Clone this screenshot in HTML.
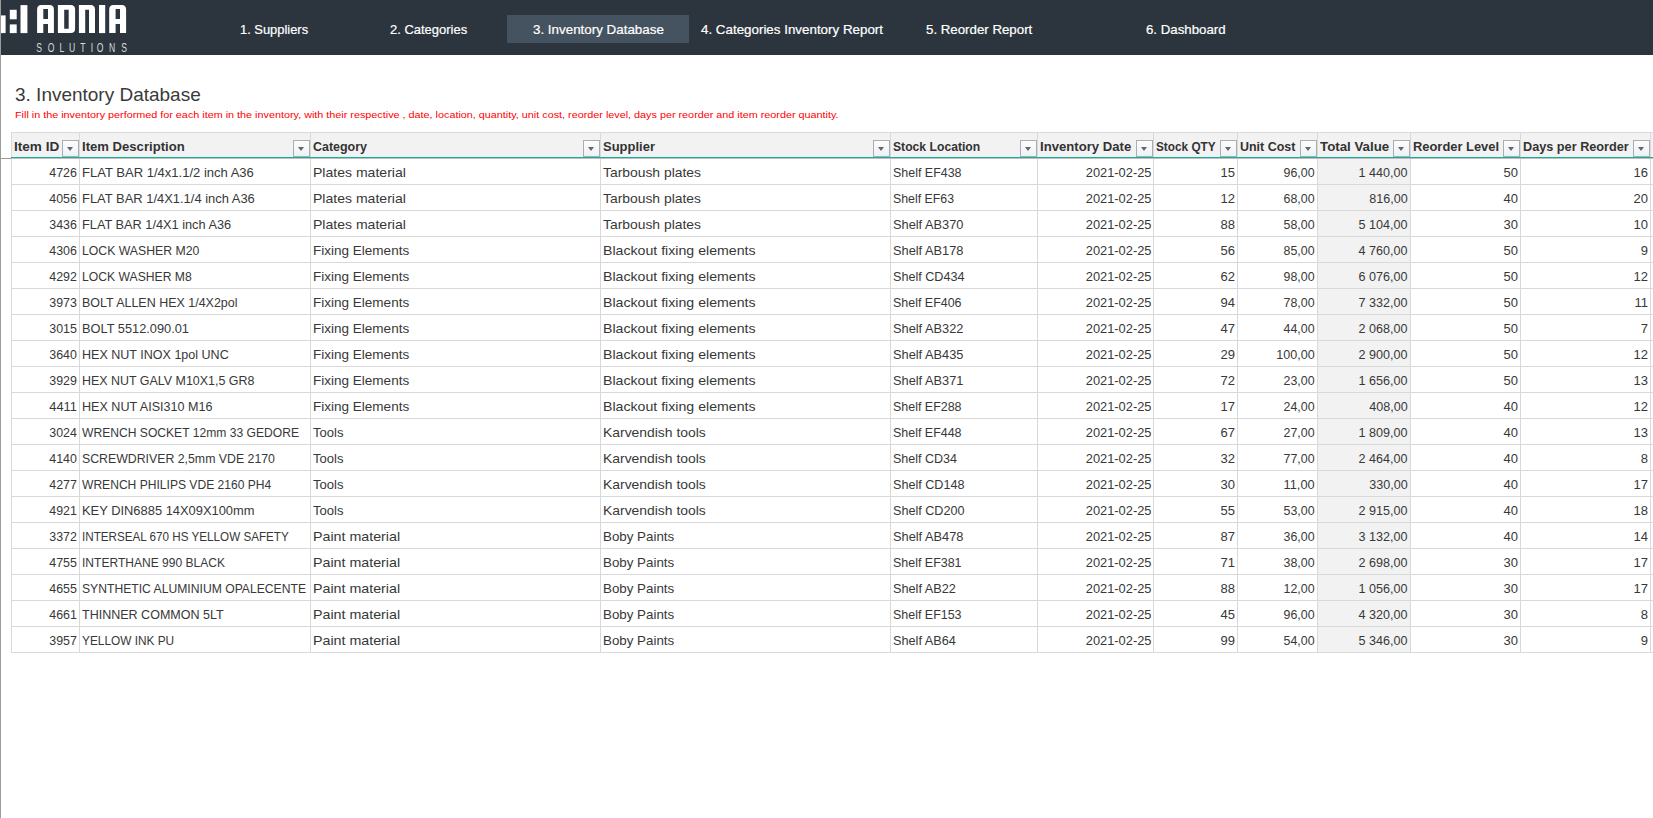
<!DOCTYPE html>
<html><head><meta charset="utf-8"><title>3. Inventory Database</title><style>
*{margin:0;padding:0;box-sizing:border-box}
html,body{width:1653px;height:818px;overflow:hidden;background:#fff}
body{position:relative;font-family:"Liberation Sans",sans-serif;color:#333}
.a{position:absolute}
.t{position:absolute;white-space:nowrap}
.t span{display:inline-block}
.hdr{left:0;top:0;width:1653px;height:55px;background:#2c353e}
.nav{top:16px;height:28px;line-height:28px;font-size:13px;color:#fff;-webkit-text-stroke:0.2px #fff}
.tab{left:507px;top:15px;width:182px;height:28px;background:#45525f}
.c{height:26px;line-height:30px;font-size:13px;color:#383838}
.h{font-weight:bold;color:#333}
.vl{position:absolute;width:1px;background:#d9d9d9}
.hl{position:absolute;height:1px;background:#d9d9d9}
.fb{position:absolute;width:17px;height:17px;border:1px solid #a9aeb6;background:linear-gradient(#fdfdfd,#eef1f5)}
.fb:after{content:"";position:absolute;left:4px;top:6px;border-left:3.5px solid transparent;border-right:3.5px solid transparent;border-top:4px solid #666}
</style></head>
<body>
<div class="a hdr"></div>
<div class="a tab"></div>
<svg class="a" style="left:0;top:0" width="140" height="55" viewBox="0 0 140 55">
<g fill="#fff">
<rect x="0" y="15.4" width="5.6" height="17.7"/>
<rect x="9.8" y="9.8" width="6.9" height="9.5"/>
<rect x="9.8" y="24.4" width="6.9" height="8.7"/>
<rect x="20.5" y="5.1" width="6.9" height="28"/>
<path d="M37.1 33.1V9.5Q37.1 5 41.3 5H49.7Q53.9 5 53.9 9.5V33.1H48V24.1H43.3V33.1ZM43.3 9.1V19.1H48V9.1Z" fill-rule="evenodd"/>
<path d="M57.9 5H70.7Q75.1 5 75.1 9.5V28.7Q75.1 33.1 70.7 33.1H57.9ZM64.2 9.7V28.7H68.7V9.7Z" fill-rule="evenodd"/>
<path d="M78.9 5H90.6Q95 5 95 9.5V33.1H89V9.7H85.2V33.1H78.9Z"/>
<rect x="99" y="5" width="6.2" height="28.1"/>
<path d="M109.2 33.1V9.5Q109.2 5 113.4 5H121.9Q126.1 5 126.1 9.5V33.1H120V24.1H115.6V33.1ZM115.6 9.1V19.1H120V9.1Z" fill-rule="evenodd"/>
</g></svg>
<div class="a" style="left:29.4px;top:40px;width:20px;text-align:center;font-size:13px;line-height:15px;color:#dadada;transform:scaleX(0.66)">S</div>
<div class="a" style="left:41.1px;top:40px;width:20px;text-align:center;font-size:13px;line-height:15px;color:#dadada;transform:scaleX(0.66)">O</div>
<div class="a" style="left:52.0px;top:40px;width:20px;text-align:center;font-size:13px;line-height:15px;color:#dadada;transform:scaleX(0.66)">L</div>
<div class="a" style="left:62.3px;top:40px;width:20px;text-align:center;font-size:13px;line-height:15px;color:#dadada;transform:scaleX(0.66)">U</div>
<div class="a" style="left:72.8px;top:40px;width:20px;text-align:center;font-size:13px;line-height:15px;color:#dadada;transform:scaleX(0.66)">T</div>
<div class="a" style="left:81.5px;top:40px;width:20px;text-align:center;font-size:13px;line-height:15px;color:#dadada;transform:scaleX(0.66)">I</div>
<div class="a" style="left:90.3px;top:40px;width:20px;text-align:center;font-size:13px;line-height:15px;color:#dadada;transform:scaleX(0.66)">O</div>
<div class="a" style="left:101.7px;top:40px;width:20px;text-align:center;font-size:13px;line-height:15px;color:#dadada;transform:scaleX(0.66)">N</div>
<div class="a" style="left:113.6px;top:40px;width:20px;text-align:center;font-size:13px;line-height:15px;color:#dadada;transform:scaleX(0.66)">S</div>
<div class="a" style="left:0;top:0;width:1px;height:818px;background:#9c9c9c"></div>
<div class="t nav" style="left:239.5px"><span style="transform:scaleX(0.992);transform-origin:left">1. Suppliers</span></div>
<div class="t nav" style="left:389.7px"><span style="transform:scaleX(0.998);transform-origin:left">2. Categories</span></div>
<div class="t nav" style="left:532.8px"><span style="transform:scaleX(1.029);transform-origin:left">3. Inventory Database</span></div>
<div class="t nav" style="left:700.6px"><span style="transform:scaleX(1.028);transform-origin:left">4. Categories Inventory Report</span></div>
<div class="t nav" style="left:926.4px"><span style="transform:scaleX(1.021);transform-origin:left">5. Reorder Report</span></div>
<div class="t nav" style="left:1146.0px"><span style="transform:scaleX(1.020);transform-origin:left">6. Dashboard</span></div>
<div class="t a" style="left:15.4px;top:84px;font-size:19px;line-height:22px;color:#3a3a3a"><span style="transform:scaleX(0.999);transform-origin:left">3. Inventory Database</span></div>
<div class="t a" style="left:14.8px;top:109px;font-size:9px;line-height:12px;color:#f00"><span style="transform:scaleX(1.200);transform-origin:left">Fill in the inventory performed for each item in the inventory, with their respective , date, location, quantity, unit cost, reorder level, days per reorder and item reorder quantity.</span></div>
<div class="a" style="left:11px;top:132px;width:1642px;height:26px;background:#f2f2f2"></div>
<div class="a" style="left:1317px;top:158px;width:93px;height:494px;background:#f2f2f2"></div>
<div class="vl" style="left:11px;top:132px;height:521px"></div>
<div class="vl" style="left:79px;top:132px;height:521px"></div>
<div class="vl" style="left:310px;top:132px;height:521px"></div>
<div class="vl" style="left:600px;top:132px;height:521px"></div>
<div class="vl" style="left:890px;top:132px;height:521px"></div>
<div class="vl" style="left:1037px;top:132px;height:521px"></div>
<div class="vl" style="left:1153px;top:132px;height:521px"></div>
<div class="vl" style="left:1237px;top:132px;height:521px"></div>
<div class="vl" style="left:1317px;top:132px;height:521px"></div>
<div class="vl" style="left:1410px;top:132px;height:521px"></div>
<div class="vl" style="left:1520px;top:132px;height:521px"></div>
<div class="vl" style="left:1650px;top:132px;height:521px"></div>
<div class="hl" style="left:11px;top:132px;width:1642px"></div>
<div class="hl" style="left:11px;top:184px;width:1642px"></div>
<div class="hl" style="left:11px;top:210px;width:1642px"></div>
<div class="hl" style="left:11px;top:236px;width:1642px"></div>
<div class="hl" style="left:11px;top:262px;width:1642px"></div>
<div class="hl" style="left:11px;top:288px;width:1642px"></div>
<div class="hl" style="left:11px;top:314px;width:1642px"></div>
<div class="hl" style="left:11px;top:340px;width:1642px"></div>
<div class="hl" style="left:11px;top:366px;width:1642px"></div>
<div class="hl" style="left:11px;top:392px;width:1642px"></div>
<div class="hl" style="left:11px;top:418px;width:1642px"></div>
<div class="hl" style="left:11px;top:444px;width:1642px"></div>
<div class="hl" style="left:11px;top:470px;width:1642px"></div>
<div class="hl" style="left:11px;top:496px;width:1642px"></div>
<div class="hl" style="left:11px;top:522px;width:1642px"></div>
<div class="hl" style="left:11px;top:548px;width:1642px"></div>
<div class="hl" style="left:11px;top:574px;width:1642px"></div>
<div class="hl" style="left:11px;top:600px;width:1642px"></div>
<div class="hl" style="left:11px;top:626px;width:1642px"></div>
<div class="hl" style="left:11px;top:652px;width:1642px"></div>
<div class="a" style="left:11px;top:157px;width:1642px;height:1px;background:#0db2a2"></div>
<div class="a" style="left:11px;top:158px;width:1642px;height:1px;background:#c4bcbc"></div>
<div class="a" style="left:0;top:158px;width:11px;height:1px;background:#9c9c9c"></div>
<div class="t c h" style="left:14px;top:132px"><span style="transform:scaleX(1.043);transform-origin:left">Item ID</span></div>
<div class="fb" style="left:62px;top:140px"></div>
<div class="t c h" style="left:82px;top:132px"><span style="transform:scaleX(1.008);transform-origin:left">Item Description</span></div>
<div class="fb" style="left:293px;top:140px"></div>
<div class="t c h" style="left:313px;top:132px"><span style="transform:scaleX(0.958);transform-origin:left">Category</span></div>
<div class="fb" style="left:583px;top:140px"></div>
<div class="t c h" style="left:603px;top:132px"><span style="transform:scaleX(0.999);transform-origin:left">Supplier</span></div>
<div class="fb" style="left:873px;top:140px"></div>
<div class="t c h" style="left:893px;top:132px"><span style="transform:scaleX(0.936);transform-origin:left">Stock Location</span></div>
<div class="fb" style="left:1020px;top:140px"></div>
<div class="t c h" style="left:1040px;top:132px"><span style="transform:scaleX(1.010);transform-origin:left">Inventory Date</span></div>
<div class="fb" style="left:1136px;top:140px"></div>
<div class="t c h" style="left:1156px;top:132px"><span style="transform:scaleX(0.908);transform-origin:left">Stock QTY</span></div>
<div class="fb" style="left:1220px;top:140px"></div>
<div class="t c h" style="left:1240px;top:132px"><span style="transform:scaleX(0.958);transform-origin:left">Unit Cost</span></div>
<div class="fb" style="left:1300px;top:140px"></div>
<div class="t c h" style="left:1320px;top:132px"><span style="transform:scaleX(1.023);transform-origin:left">Total Value</span></div>
<div class="fb" style="left:1393px;top:140px"></div>
<div class="t c h" style="left:1413px;top:132px"><span style="transform:scaleX(0.992);transform-origin:left">Reorder Level</span></div>
<div class="fb" style="left:1503px;top:140px"></div>
<div class="t c h" style="left:1523px;top:132px"><span style="transform:scaleX(0.976);transform-origin:left">Days per Reorder</span></div>
<div class="fb" style="left:1633px;top:140px"></div>
<div class="t c" style="right:1576px;top:158px"><span style="transform:scaleX(0.955);transform-origin:right">4726</span></div>
<div class="t c" style="left:82px;top:158px"><span style="transform:scaleX(1.002);transform-origin:left">FLAT BAR 1/4x1.1/2 inch A36</span></div>
<div class="t c" style="left:313px;top:158px"><span style="transform:scaleX(1.080);transform-origin:left">Plates material</span></div>
<div class="t c" style="left:603px;top:158px"><span style="transform:scaleX(1.067);transform-origin:left">Tarboush plates</span></div>
<div class="t c" style="left:893px;top:158px"><span style="transform:scaleX(0.958);transform-origin:left">Shelf EF438</span></div>
<div class="t c" style="right:502px;top:158px"><span style="transform:scaleX(0.989);transform-origin:right">2021-02-25</span></div>
<div class="t c" style="right:418px;top:158px"><span style="transform:scaleX(1.000);transform-origin:right">15</span></div>
<div class="t c" style="right:338px;top:158px"><span style="transform:scaleX(0.952);transform-origin:right">96,00</span></div>
<div class="t c" style="right:245px;top:158px"><span style="transform:scaleX(0.968);transform-origin:right">1 440,00</span></div>
<div class="t c" style="right:135px;top:158px"><span style="transform:scaleX(1.000);transform-origin:right">50</span></div>
<div class="t c" style="right:5px;top:158px"><span style="transform:scaleX(1.000);transform-origin:right">16</span></div>
<div class="t c" style="right:1576px;top:184px"><span style="transform:scaleX(0.955);transform-origin:right">4056</span></div>
<div class="t c" style="left:82px;top:184px"><span style="transform:scaleX(0.995);transform-origin:left">FLAT BAR 1/4X1.1/4 inch A36</span></div>
<div class="t c" style="left:313px;top:184px"><span style="transform:scaleX(1.080);transform-origin:left">Plates material</span></div>
<div class="t c" style="left:603px;top:184px"><span style="transform:scaleX(1.067);transform-origin:left">Tarboush plates</span></div>
<div class="t c" style="left:893px;top:184px"><span style="transform:scaleX(0.949);transform-origin:left">Shelf EF63</span></div>
<div class="t c" style="right:502px;top:184px"><span style="transform:scaleX(0.989);transform-origin:right">2021-02-25</span></div>
<div class="t c" style="right:418px;top:184px"><span style="transform:scaleX(1.000);transform-origin:right">12</span></div>
<div class="t c" style="right:338px;top:184px"><span style="transform:scaleX(0.952);transform-origin:right">68,00</span></div>
<div class="t c" style="right:245px;top:184px"><span style="transform:scaleX(0.967);transform-origin:right">816,00</span></div>
<div class="t c" style="right:135px;top:184px"><span style="transform:scaleX(1.000);transform-origin:right">40</span></div>
<div class="t c" style="right:5px;top:184px"><span style="transform:scaleX(1.000);transform-origin:right">20</span></div>
<div class="t c" style="right:1576px;top:210px"><span style="transform:scaleX(0.955);transform-origin:right">3436</span></div>
<div class="t c" style="left:82px;top:210px"><span style="transform:scaleX(0.981);transform-origin:left">FLAT BAR 1/4X1 inch A36</span></div>
<div class="t c" style="left:313px;top:210px"><span style="transform:scaleX(1.080);transform-origin:left">Plates material</span></div>
<div class="t c" style="left:603px;top:210px"><span style="transform:scaleX(1.067);transform-origin:left">Tarboush plates</span></div>
<div class="t c" style="left:893px;top:210px"><span style="transform:scaleX(0.984);transform-origin:left">Shelf AB370</span></div>
<div class="t c" style="right:502px;top:210px"><span style="transform:scaleX(0.989);transform-origin:right">2021-02-25</span></div>
<div class="t c" style="right:418px;top:210px"><span style="transform:scaleX(1.000);transform-origin:right">88</span></div>
<div class="t c" style="right:338px;top:210px"><span style="transform:scaleX(0.952);transform-origin:right">58,00</span></div>
<div class="t c" style="right:245px;top:210px"><span style="transform:scaleX(0.968);transform-origin:right">5 104,00</span></div>
<div class="t c" style="right:135px;top:210px"><span style="transform:scaleX(1.000);transform-origin:right">30</span></div>
<div class="t c" style="right:5px;top:210px"><span style="transform:scaleX(1.000);transform-origin:right">10</span></div>
<div class="t c" style="right:1576px;top:236px"><span style="transform:scaleX(0.955);transform-origin:right">4306</span></div>
<div class="t c" style="left:82px;top:236px"><span style="transform:scaleX(0.942);transform-origin:left">LOCK WASHER M20</span></div>
<div class="t c" style="left:313px;top:236px"><span style="transform:scaleX(1.040);transform-origin:left">Fixing Elements</span></div>
<div class="t c" style="left:603px;top:236px"><span style="transform:scaleX(1.088);transform-origin:left">Blackout fixing elements</span></div>
<div class="t c" style="left:893px;top:236px"><span style="transform:scaleX(0.984);transform-origin:left">Shelf AB178</span></div>
<div class="t c" style="right:502px;top:236px"><span style="transform:scaleX(0.989);transform-origin:right">2021-02-25</span></div>
<div class="t c" style="right:418px;top:236px"><span style="transform:scaleX(1.000);transform-origin:right">56</span></div>
<div class="t c" style="right:338px;top:236px"><span style="transform:scaleX(0.952);transform-origin:right">85,00</span></div>
<div class="t c" style="right:245px;top:236px"><span style="transform:scaleX(0.968);transform-origin:right">4 760,00</span></div>
<div class="t c" style="right:135px;top:236px"><span style="transform:scaleX(1.000);transform-origin:right">50</span></div>
<div class="t c" style="right:5px;top:236px"><span style="transform:scaleX(1.000);transform-origin:right">9</span></div>
<div class="t c" style="right:1576px;top:262px"><span style="transform:scaleX(0.955);transform-origin:right">4292</span></div>
<div class="t c" style="left:82px;top:262px"><span style="transform:scaleX(0.936);transform-origin:left">LOCK WASHER M8</span></div>
<div class="t c" style="left:313px;top:262px"><span style="transform:scaleX(1.040);transform-origin:left">Fixing Elements</span></div>
<div class="t c" style="left:603px;top:262px"><span style="transform:scaleX(1.088);transform-origin:left">Blackout fixing elements</span></div>
<div class="t c" style="left:893px;top:262px"><span style="transform:scaleX(0.970);transform-origin:left">Shelf CD434</span></div>
<div class="t c" style="right:502px;top:262px"><span style="transform:scaleX(0.989);transform-origin:right">2021-02-25</span></div>
<div class="t c" style="right:418px;top:262px"><span style="transform:scaleX(1.000);transform-origin:right">62</span></div>
<div class="t c" style="right:338px;top:262px"><span style="transform:scaleX(0.952);transform-origin:right">98,00</span></div>
<div class="t c" style="right:245px;top:262px"><span style="transform:scaleX(0.968);transform-origin:right">6 076,00</span></div>
<div class="t c" style="right:135px;top:262px"><span style="transform:scaleX(1.000);transform-origin:right">50</span></div>
<div class="t c" style="right:5px;top:262px"><span style="transform:scaleX(1.000);transform-origin:right">12</span></div>
<div class="t c" style="right:1576px;top:288px"><span style="transform:scaleX(0.955);transform-origin:right">3973</span></div>
<div class="t c" style="left:82px;top:288px"><span style="transform:scaleX(0.959);transform-origin:left">BOLT ALLEN HEX 1/4X2pol</span></div>
<div class="t c" style="left:313px;top:288px"><span style="transform:scaleX(1.040);transform-origin:left">Fixing Elements</span></div>
<div class="t c" style="left:603px;top:288px"><span style="transform:scaleX(1.088);transform-origin:left">Blackout fixing elements</span></div>
<div class="t c" style="left:893px;top:288px"><span style="transform:scaleX(0.958);transform-origin:left">Shelf EF406</span></div>
<div class="t c" style="right:502px;top:288px"><span style="transform:scaleX(0.989);transform-origin:right">2021-02-25</span></div>
<div class="t c" style="right:418px;top:288px"><span style="transform:scaleX(1.000);transform-origin:right">94</span></div>
<div class="t c" style="right:338px;top:288px"><span style="transform:scaleX(0.952);transform-origin:right">78,00</span></div>
<div class="t c" style="right:245px;top:288px"><span style="transform:scaleX(0.968);transform-origin:right">7 332,00</span></div>
<div class="t c" style="right:135px;top:288px"><span style="transform:scaleX(1.000);transform-origin:right">50</span></div>
<div class="t c" style="right:5px;top:288px"><span style="transform:scaleX(1.000);transform-origin:right">11</span></div>
<div class="t c" style="right:1576px;top:314px"><span style="transform:scaleX(0.955);transform-origin:right">3015</span></div>
<div class="t c" style="left:82px;top:314px"><span style="transform:scaleX(0.984);transform-origin:left">BOLT 5512.090.01</span></div>
<div class="t c" style="left:313px;top:314px"><span style="transform:scaleX(1.040);transform-origin:left">Fixing Elements</span></div>
<div class="t c" style="left:603px;top:314px"><span style="transform:scaleX(1.088);transform-origin:left">Blackout fixing elements</span></div>
<div class="t c" style="left:893px;top:314px"><span style="transform:scaleX(0.984);transform-origin:left">Shelf AB322</span></div>
<div class="t c" style="right:502px;top:314px"><span style="transform:scaleX(0.989);transform-origin:right">2021-02-25</span></div>
<div class="t c" style="right:418px;top:314px"><span style="transform:scaleX(1.000);transform-origin:right">47</span></div>
<div class="t c" style="right:338px;top:314px"><span style="transform:scaleX(0.952);transform-origin:right">44,00</span></div>
<div class="t c" style="right:245px;top:314px"><span style="transform:scaleX(0.968);transform-origin:right">2 068,00</span></div>
<div class="t c" style="right:135px;top:314px"><span style="transform:scaleX(1.000);transform-origin:right">50</span></div>
<div class="t c" style="right:5px;top:314px"><span style="transform:scaleX(1.000);transform-origin:right">7</span></div>
<div class="t c" style="right:1576px;top:340px"><span style="transform:scaleX(0.955);transform-origin:right">3640</span></div>
<div class="t c" style="left:82px;top:340px"><span style="transform:scaleX(0.964);transform-origin:left">HEX NUT INOX 1pol UNC</span></div>
<div class="t c" style="left:313px;top:340px"><span style="transform:scaleX(1.040);transform-origin:left">Fixing Elements</span></div>
<div class="t c" style="left:603px;top:340px"><span style="transform:scaleX(1.088);transform-origin:left">Blackout fixing elements</span></div>
<div class="t c" style="left:893px;top:340px"><span style="transform:scaleX(0.984);transform-origin:left">Shelf AB435</span></div>
<div class="t c" style="right:502px;top:340px"><span style="transform:scaleX(0.989);transform-origin:right">2021-02-25</span></div>
<div class="t c" style="right:418px;top:340px"><span style="transform:scaleX(1.000);transform-origin:right">29</span></div>
<div class="t c" style="right:338px;top:340px"><span style="transform:scaleX(0.967);transform-origin:right">100,00</span></div>
<div class="t c" style="right:245px;top:340px"><span style="transform:scaleX(0.968);transform-origin:right">2 900,00</span></div>
<div class="t c" style="right:135px;top:340px"><span style="transform:scaleX(1.000);transform-origin:right">50</span></div>
<div class="t c" style="right:5px;top:340px"><span style="transform:scaleX(1.000);transform-origin:right">12</span></div>
<div class="t c" style="right:1576px;top:366px"><span style="transform:scaleX(0.955);transform-origin:right">3929</span></div>
<div class="t c" style="left:82px;top:366px"><span style="transform:scaleX(0.957);transform-origin:left">HEX NUT GALV M10X1,5 GR8</span></div>
<div class="t c" style="left:313px;top:366px"><span style="transform:scaleX(1.040);transform-origin:left">Fixing Elements</span></div>
<div class="t c" style="left:603px;top:366px"><span style="transform:scaleX(1.088);transform-origin:left">Blackout fixing elements</span></div>
<div class="t c" style="left:893px;top:366px"><span style="transform:scaleX(0.984);transform-origin:left">Shelf AB371</span></div>
<div class="t c" style="right:502px;top:366px"><span style="transform:scaleX(0.989);transform-origin:right">2021-02-25</span></div>
<div class="t c" style="right:418px;top:366px"><span style="transform:scaleX(1.000);transform-origin:right">72</span></div>
<div class="t c" style="right:338px;top:366px"><span style="transform:scaleX(0.952);transform-origin:right">23,00</span></div>
<div class="t c" style="right:245px;top:366px"><span style="transform:scaleX(0.968);transform-origin:right">1 656,00</span></div>
<div class="t c" style="right:135px;top:366px"><span style="transform:scaleX(1.000);transform-origin:right">50</span></div>
<div class="t c" style="right:5px;top:366px"><span style="transform:scaleX(1.000);transform-origin:right">13</span></div>
<div class="t c" style="right:1576px;top:392px"><span style="transform:scaleX(0.988);transform-origin:right">4411</span></div>
<div class="t c" style="left:82px;top:392px"><span style="transform:scaleX(0.967);transform-origin:left">HEX NUT AISI310 M16</span></div>
<div class="t c" style="left:313px;top:392px"><span style="transform:scaleX(1.040);transform-origin:left">Fixing Elements</span></div>
<div class="t c" style="left:603px;top:392px"><span style="transform:scaleX(1.088);transform-origin:left">Blackout fixing elements</span></div>
<div class="t c" style="left:893px;top:392px"><span style="transform:scaleX(0.958);transform-origin:left">Shelf EF288</span></div>
<div class="t c" style="right:502px;top:392px"><span style="transform:scaleX(0.989);transform-origin:right">2021-02-25</span></div>
<div class="t c" style="right:418px;top:392px"><span style="transform:scaleX(1.000);transform-origin:right">17</span></div>
<div class="t c" style="right:338px;top:392px"><span style="transform:scaleX(0.952);transform-origin:right">24,00</span></div>
<div class="t c" style="right:245px;top:392px"><span style="transform:scaleX(0.967);transform-origin:right">408,00</span></div>
<div class="t c" style="right:135px;top:392px"><span style="transform:scaleX(1.000);transform-origin:right">40</span></div>
<div class="t c" style="right:5px;top:392px"><span style="transform:scaleX(1.000);transform-origin:right">12</span></div>
<div class="t c" style="right:1576px;top:418px"><span style="transform:scaleX(0.955);transform-origin:right">3024</span></div>
<div class="t c" style="left:82px;top:418px"><span style="transform:scaleX(0.931);transform-origin:left">WRENCH SOCKET 12mm 33 GEDORE</span></div>
<div class="t c" style="left:313px;top:418px"><span style="transform:scaleX(1.005);transform-origin:left">Tools</span></div>
<div class="t c" style="left:603px;top:418px"><span style="transform:scaleX(1.069);transform-origin:left">Karvendish tools</span></div>
<div class="t c" style="left:893px;top:418px"><span style="transform:scaleX(0.958);transform-origin:left">Shelf EF448</span></div>
<div class="t c" style="right:502px;top:418px"><span style="transform:scaleX(0.989);transform-origin:right">2021-02-25</span></div>
<div class="t c" style="right:418px;top:418px"><span style="transform:scaleX(1.000);transform-origin:right">67</span></div>
<div class="t c" style="right:338px;top:418px"><span style="transform:scaleX(0.952);transform-origin:right">27,00</span></div>
<div class="t c" style="right:245px;top:418px"><span style="transform:scaleX(0.968);transform-origin:right">1 809,00</span></div>
<div class="t c" style="right:135px;top:418px"><span style="transform:scaleX(1.000);transform-origin:right">40</span></div>
<div class="t c" style="right:5px;top:418px"><span style="transform:scaleX(1.000);transform-origin:right">13</span></div>
<div class="t c" style="right:1576px;top:444px"><span style="transform:scaleX(0.955);transform-origin:right">4140</span></div>
<div class="t c" style="left:82px;top:444px"><span style="transform:scaleX(0.947);transform-origin:left">SCREWDRIVER 2,5mm VDE 2170</span></div>
<div class="t c" style="left:313px;top:444px"><span style="transform:scaleX(1.005);transform-origin:left">Tools</span></div>
<div class="t c" style="left:603px;top:444px"><span style="transform:scaleX(1.069);transform-origin:left">Karvendish tools</span></div>
<div class="t c" style="left:893px;top:444px"><span style="transform:scaleX(0.963);transform-origin:left">Shelf CD34</span></div>
<div class="t c" style="right:502px;top:444px"><span style="transform:scaleX(0.989);transform-origin:right">2021-02-25</span></div>
<div class="t c" style="right:418px;top:444px"><span style="transform:scaleX(1.000);transform-origin:right">32</span></div>
<div class="t c" style="right:338px;top:444px"><span style="transform:scaleX(0.952);transform-origin:right">77,00</span></div>
<div class="t c" style="right:245px;top:444px"><span style="transform:scaleX(0.968);transform-origin:right">2 464,00</span></div>
<div class="t c" style="right:135px;top:444px"><span style="transform:scaleX(1.000);transform-origin:right">40</span></div>
<div class="t c" style="right:5px;top:444px"><span style="transform:scaleX(1.000);transform-origin:right">8</span></div>
<div class="t c" style="right:1576px;top:470px"><span style="transform:scaleX(0.955);transform-origin:right">4277</span></div>
<div class="t c" style="left:82px;top:470px"><span style="transform:scaleX(0.929);transform-origin:left">WRENCH PHILIPS VDE 2160 PH4</span></div>
<div class="t c" style="left:313px;top:470px"><span style="transform:scaleX(1.005);transform-origin:left">Tools</span></div>
<div class="t c" style="left:603px;top:470px"><span style="transform:scaleX(1.069);transform-origin:left">Karvendish tools</span></div>
<div class="t c" style="left:893px;top:470px"><span style="transform:scaleX(0.970);transform-origin:left">Shelf CD148</span></div>
<div class="t c" style="right:502px;top:470px"><span style="transform:scaleX(0.989);transform-origin:right">2021-02-25</span></div>
<div class="t c" style="right:418px;top:470px"><span style="transform:scaleX(1.000);transform-origin:right">30</span></div>
<div class="t c" style="right:338px;top:470px"><span style="transform:scaleX(0.981);transform-origin:right">11,00</span></div>
<div class="t c" style="right:245px;top:470px"><span style="transform:scaleX(0.967);transform-origin:right">330,00</span></div>
<div class="t c" style="right:135px;top:470px"><span style="transform:scaleX(1.000);transform-origin:right">40</span></div>
<div class="t c" style="right:5px;top:470px"><span style="transform:scaleX(1.000);transform-origin:right">17</span></div>
<div class="t c" style="right:1576px;top:496px"><span style="transform:scaleX(0.955);transform-origin:right">4921</span></div>
<div class="t c" style="left:82px;top:496px"><span style="transform:scaleX(0.992);transform-origin:left">KEY DIN6885 14X09X100mm</span></div>
<div class="t c" style="left:313px;top:496px"><span style="transform:scaleX(1.005);transform-origin:left">Tools</span></div>
<div class="t c" style="left:603px;top:496px"><span style="transform:scaleX(1.069);transform-origin:left">Karvendish tools</span></div>
<div class="t c" style="left:893px;top:496px"><span style="transform:scaleX(0.970);transform-origin:left">Shelf CD200</span></div>
<div class="t c" style="right:502px;top:496px"><span style="transform:scaleX(0.989);transform-origin:right">2021-02-25</span></div>
<div class="t c" style="right:418px;top:496px"><span style="transform:scaleX(1.000);transform-origin:right">55</span></div>
<div class="t c" style="right:338px;top:496px"><span style="transform:scaleX(0.952);transform-origin:right">53,00</span></div>
<div class="t c" style="right:245px;top:496px"><span style="transform:scaleX(0.968);transform-origin:right">2 915,00</span></div>
<div class="t c" style="right:135px;top:496px"><span style="transform:scaleX(1.000);transform-origin:right">40</span></div>
<div class="t c" style="right:5px;top:496px"><span style="transform:scaleX(1.000);transform-origin:right">18</span></div>
<div class="t c" style="right:1576px;top:522px"><span style="transform:scaleX(0.955);transform-origin:right">3372</span></div>
<div class="t c" style="left:82px;top:522px"><span style="transform:scaleX(0.897);transform-origin:left">INTERSEAL 670 HS YELLOW SAFETY</span></div>
<div class="t c" style="left:313px;top:522px"><span style="transform:scaleX(1.096);transform-origin:left">Paint material</span></div>
<div class="t c" style="left:603px;top:522px"><span style="transform:scaleX(1.026);transform-origin:left">Boby Paints</span></div>
<div class="t c" style="left:893px;top:522px"><span style="transform:scaleX(0.984);transform-origin:left">Shelf AB478</span></div>
<div class="t c" style="right:502px;top:522px"><span style="transform:scaleX(0.989);transform-origin:right">2021-02-25</span></div>
<div class="t c" style="right:418px;top:522px"><span style="transform:scaleX(1.000);transform-origin:right">87</span></div>
<div class="t c" style="right:338px;top:522px"><span style="transform:scaleX(0.952);transform-origin:right">36,00</span></div>
<div class="t c" style="right:245px;top:522px"><span style="transform:scaleX(0.968);transform-origin:right">3 132,00</span></div>
<div class="t c" style="right:135px;top:522px"><span style="transform:scaleX(1.000);transform-origin:right">40</span></div>
<div class="t c" style="right:5px;top:522px"><span style="transform:scaleX(1.000);transform-origin:right">14</span></div>
<div class="t c" style="right:1576px;top:548px"><span style="transform:scaleX(0.955);transform-origin:right">4755</span></div>
<div class="t c" style="left:82px;top:548px"><span style="transform:scaleX(0.926);transform-origin:left">INTERTHANE 990 BLACK</span></div>
<div class="t c" style="left:313px;top:548px"><span style="transform:scaleX(1.096);transform-origin:left">Paint material</span></div>
<div class="t c" style="left:603px;top:548px"><span style="transform:scaleX(1.026);transform-origin:left">Boby Paints</span></div>
<div class="t c" style="left:893px;top:548px"><span style="transform:scaleX(0.958);transform-origin:left">Shelf EF381</span></div>
<div class="t c" style="right:502px;top:548px"><span style="transform:scaleX(0.989);transform-origin:right">2021-02-25</span></div>
<div class="t c" style="right:418px;top:548px"><span style="transform:scaleX(1.000);transform-origin:right">71</span></div>
<div class="t c" style="right:338px;top:548px"><span style="transform:scaleX(0.952);transform-origin:right">38,00</span></div>
<div class="t c" style="right:245px;top:548px"><span style="transform:scaleX(0.968);transform-origin:right">2 698,00</span></div>
<div class="t c" style="right:135px;top:548px"><span style="transform:scaleX(1.000);transform-origin:right">30</span></div>
<div class="t c" style="right:5px;top:548px"><span style="transform:scaleX(1.000);transform-origin:right">17</span></div>
<div class="t c" style="right:1576px;top:574px"><span style="transform:scaleX(0.955);transform-origin:right">4655</span></div>
<div class="t c" style="left:82px;top:574px"><span style="transform:scaleX(0.935);transform-origin:left">SYNTHETIC ALUMINIUM OPALECENTE</span></div>
<div class="t c" style="left:313px;top:574px"><span style="transform:scaleX(1.096);transform-origin:left">Paint material</span></div>
<div class="t c" style="left:603px;top:574px"><span style="transform:scaleX(1.026);transform-origin:left">Boby Paints</span></div>
<div class="t c" style="left:893px;top:574px"><span style="transform:scaleX(0.978);transform-origin:left">Shelf AB22</span></div>
<div class="t c" style="right:502px;top:574px"><span style="transform:scaleX(0.989);transform-origin:right">2021-02-25</span></div>
<div class="t c" style="right:418px;top:574px"><span style="transform:scaleX(1.000);transform-origin:right">88</span></div>
<div class="t c" style="right:338px;top:574px"><span style="transform:scaleX(0.952);transform-origin:right">12,00</span></div>
<div class="t c" style="right:245px;top:574px"><span style="transform:scaleX(0.968);transform-origin:right">1 056,00</span></div>
<div class="t c" style="right:135px;top:574px"><span style="transform:scaleX(1.000);transform-origin:right">30</span></div>
<div class="t c" style="right:5px;top:574px"><span style="transform:scaleX(1.000);transform-origin:right">17</span></div>
<div class="t c" style="right:1576px;top:600px"><span style="transform:scaleX(0.955);transform-origin:right">4661</span></div>
<div class="t c" style="left:82px;top:600px"><span style="transform:scaleX(0.963);transform-origin:left">THINNER COMMON 5LT</span></div>
<div class="t c" style="left:313px;top:600px"><span style="transform:scaleX(1.096);transform-origin:left">Paint material</span></div>
<div class="t c" style="left:603px;top:600px"><span style="transform:scaleX(1.026);transform-origin:left">Boby Paints</span></div>
<div class="t c" style="left:893px;top:600px"><span style="transform:scaleX(0.958);transform-origin:left">Shelf EF153</span></div>
<div class="t c" style="right:502px;top:600px"><span style="transform:scaleX(0.989);transform-origin:right">2021-02-25</span></div>
<div class="t c" style="right:418px;top:600px"><span style="transform:scaleX(1.000);transform-origin:right">45</span></div>
<div class="t c" style="right:338px;top:600px"><span style="transform:scaleX(0.952);transform-origin:right">96,00</span></div>
<div class="t c" style="right:245px;top:600px"><span style="transform:scaleX(0.968);transform-origin:right">4 320,00</span></div>
<div class="t c" style="right:135px;top:600px"><span style="transform:scaleX(1.000);transform-origin:right">30</span></div>
<div class="t c" style="right:5px;top:600px"><span style="transform:scaleX(1.000);transform-origin:right">8</span></div>
<div class="t c" style="right:1576px;top:626px"><span style="transform:scaleX(0.955);transform-origin:right">3957</span></div>
<div class="t c" style="left:82px;top:626px"><span style="transform:scaleX(0.911);transform-origin:left">YELLOW INK PU</span></div>
<div class="t c" style="left:313px;top:626px"><span style="transform:scaleX(1.096);transform-origin:left">Paint material</span></div>
<div class="t c" style="left:603px;top:626px"><span style="transform:scaleX(1.026);transform-origin:left">Boby Paints</span></div>
<div class="t c" style="left:893px;top:626px"><span style="transform:scaleX(0.978);transform-origin:left">Shelf AB64</span></div>
<div class="t c" style="right:502px;top:626px"><span style="transform:scaleX(0.989);transform-origin:right">2021-02-25</span></div>
<div class="t c" style="right:418px;top:626px"><span style="transform:scaleX(1.000);transform-origin:right">99</span></div>
<div class="t c" style="right:338px;top:626px"><span style="transform:scaleX(0.952);transform-origin:right">54,00</span></div>
<div class="t c" style="right:245px;top:626px"><span style="transform:scaleX(0.968);transform-origin:right">5 346,00</span></div>
<div class="t c" style="right:135px;top:626px"><span style="transform:scaleX(1.000);transform-origin:right">30</span></div>
<div class="t c" style="right:5px;top:626px"><span style="transform:scaleX(1.000);transform-origin:right">9</span></div>
</body></html>
